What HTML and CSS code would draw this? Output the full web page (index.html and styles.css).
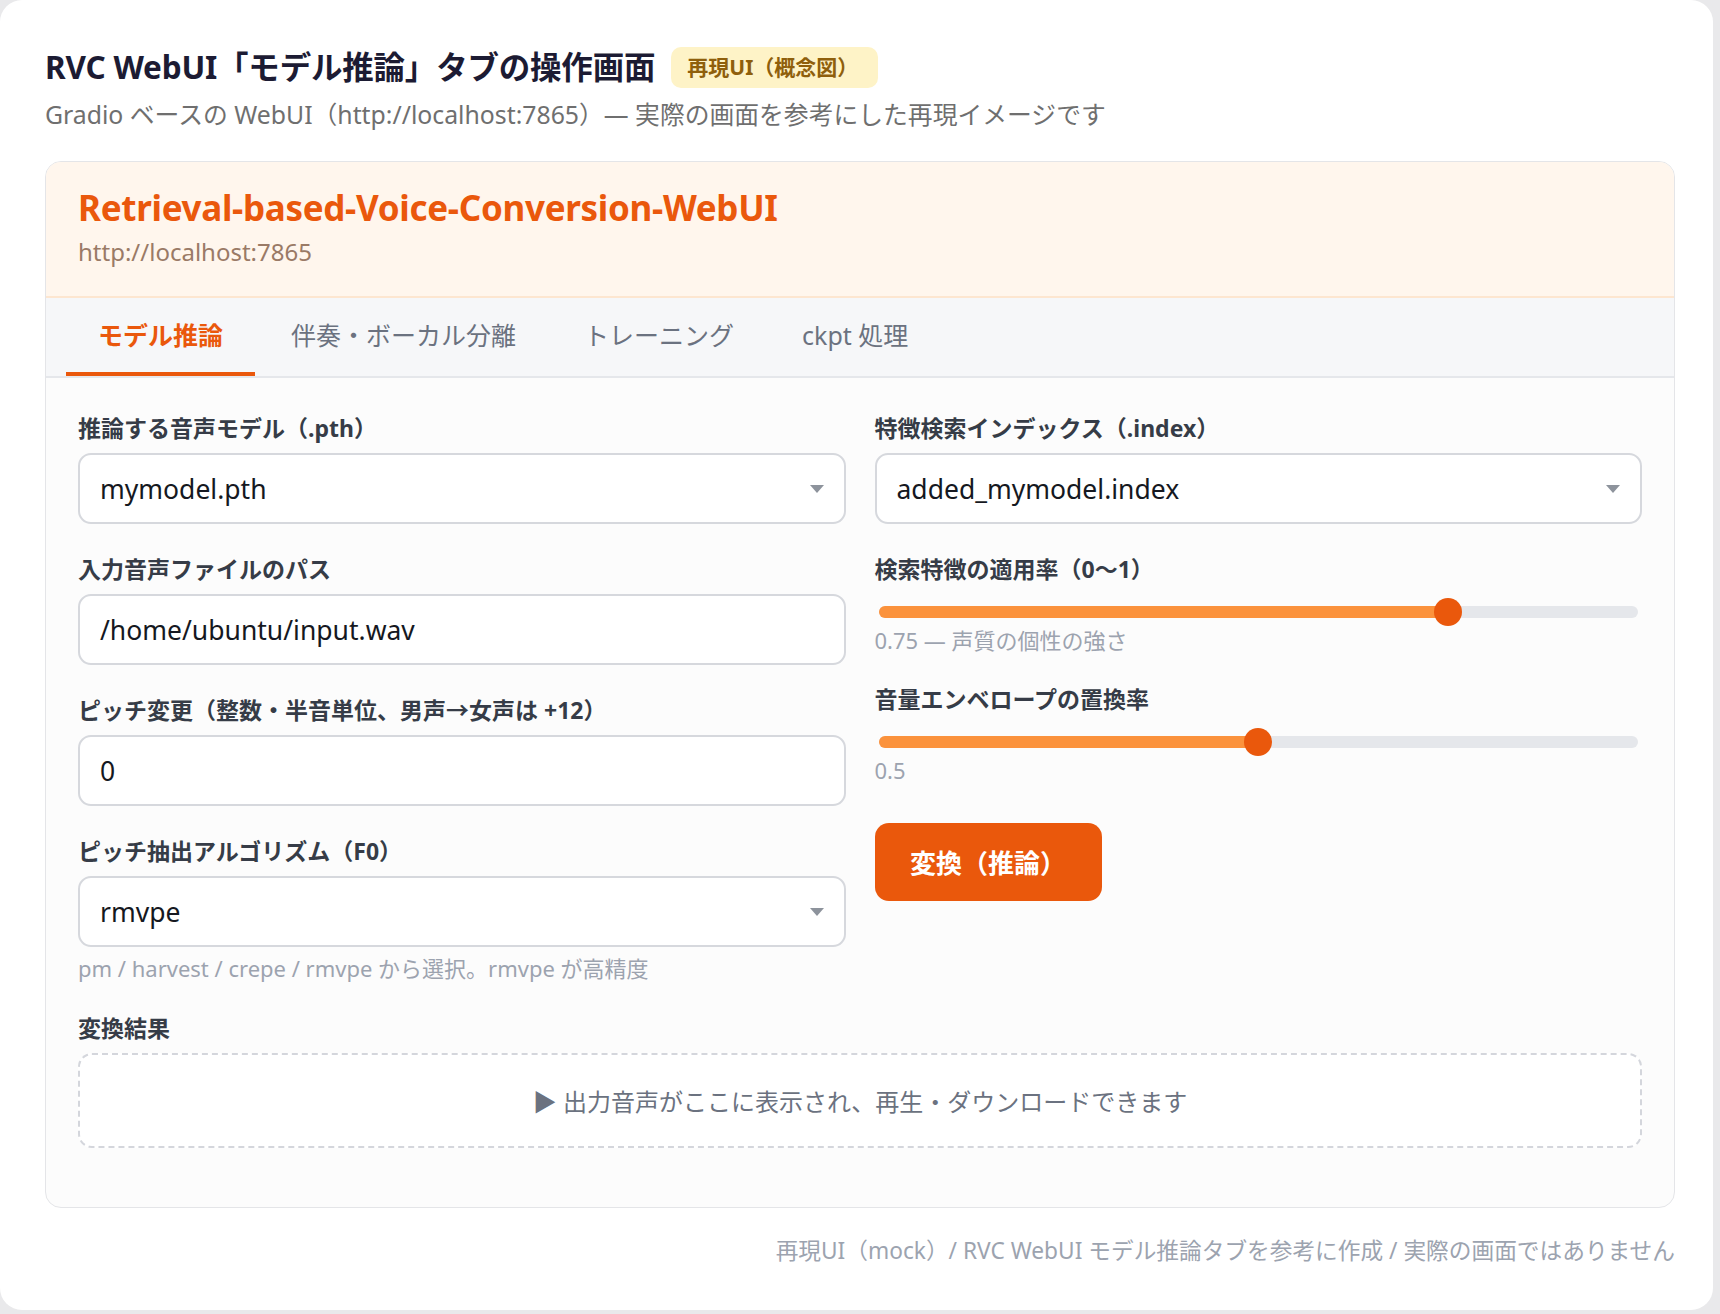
FILE: index.html
```html
<!DOCTYPE html>
<html lang="ja">
<head>
<meta charset="utf-8">
<title>RVC WebUI モデル推論</title>
<link rel="stylesheet" href="styles.css">
</head>
<body>
<div class="page">
  <div class="page-head">
    <h1 class="page-title">RVC WebUI「モデル推論」タブの操作画面</h1>
    <span class="badge">再現UI（概念図）</span>
  </div>
  <p class="page-sub">Gradio ベースの WebUI（http://localhost:7865）— 実際の画面を参考にした再現イメージです</p>

  <div class="app">
    <div class="app-head">
      <div class="app-title">Retrieval-based-Voice-Conversion-WebUI</div>
      <div class="app-url">http://localhost:7865</div>
    </div>
    <div class="tabs">
      <div class="tab active">モデル推論</div>
      <div class="tab">伴奏・ボーカル分離</div>
      <div class="tab">トレーニング</div>
      <div class="tab">ckpt 処理</div>
    </div>
    <div class="content">
      <div class="cols">
        <div class="col">
          <div class="field">
            <div class="label">推論する音声モデル（.pth）</div>
            <div class="box select"><span>mymodel.pth</span><svg class="caret" width="14" height="8" viewBox="0 0 14 8"><polygon points="0,0 14,0 7,8" fill="#8d939c"/></svg></div>
          </div>
          <div class="field">
            <div class="label">入力音声ファイルのパス</div>
            <div class="box"><span>/home/ubuntu/input.wav</span></div>
          </div>
          <div class="field">
            <div class="label">ピッチ変更（整数・半音単位、男声→女声は +12）</div>
            <div class="box"><span>0</span></div>
          </div>
          <div class="field">
            <div class="label">ピッチ抽出アルゴリズム（F0）</div>
            <div class="box select"><span>rmvpe</span><svg class="caret" width="14" height="8" viewBox="0 0 14 8"><polygon points="0,0 14,0 7,8" fill="#8d939c"/></svg></div>
            <div class="hint">pm / harvest / crepe / rmvpe から選択。rmvpe が高精度</div>
          </div>
        </div>
        <div class="col">
          <div class="field">
            <div class="label">特徴検索インデックス（.index）</div>
            <div class="box select"><span>added_mymodel.index</span><svg class="caret" width="14" height="8" viewBox="0 0 14 8"><polygon points="0,0 14,0 7,8" fill="#8d939c"/></svg></div>
          </div>
          <div class="field">
            <div class="label">検索特徴の適用率（0〜1）</div>
            <div class="slider">
              <div class="track"><div class="fill" style="width:75%"></div><div class="thumb" style="left:75%"></div></div>
            </div>
            <div class="value">0.75 — 声質の個性の強さ</div>
          </div>
          <div class="field field-last">
            <div class="label">音量エンベロープの置換率</div>
            <div class="slider">
              <div class="track"><div class="fill" style="width:50%"></div><div class="thumb" style="left:50%"></div></div>
            </div>
            <div class="value">0.5</div>
          </div>
          <button class="btn">変換（推論）</button>
        </div>
      </div>
      <div class="result">
        <div class="label">変換結果</div>
        <div class="dropzone">▶ 出力音声がここに表示され、再生・ダウンロードできます</div>
      </div>
    </div>
  </div>
  <p class="footer">再現UI（mock）/ RVC WebUI モデル推論タブを参考に作成 / 実際の画面ではありません</p>
</div>
</body>
</html>
```
FILE: styles.css
```css
* { box-sizing: border-box; }
html, body { margin: 0; padding: 0; }
body {
  background: #e9e9eb;
  font-family: "Noto Sans", "Noto Sans CJK JP", sans-serif;
  width: 1720px;
  height: 1314px;
  overflow: hidden;
}
.page {
  width: 1713px;
  height: 1310px;
  background: #ffffff;
  border-radius: 22px;
  padding: 44px 38px 0 45px;
}
.page-head {
  display: flex;
  align-items: center;
  gap: 16px;
  height: 46px;
}
.page-title {
  margin: 0;
  font-size: 31.5px;
  font-weight: 700;
  color: #1c1b33;
  line-height: 46px;
  letter-spacing: -0.2px;
}
.badge {
  background: #fef3c7;
  color: #8f5f0c;
  font-size: 21px;
  font-weight: 700;
  border-radius: 10px;
  padding: 0 20px 0 16px;
  height: 41px;
  line-height: 41px;
}
.page-sub {
  margin: 7px 0 0;
  font-size: 24.8px;
  line-height: 34px;
  color: #6f6f6f;
}
.app {
  margin-top: 30px;
  border: 1px solid #e4e5e8;
  border-radius: 16px;
  background: #fcfcfc;
  overflow: hidden;
}
.app-head {
  background: #fff6ed;
  border-bottom: 2px solid #fde6d0;
  padding: 23px 32px 27px;
}
.app-title {
  font-size: 35px;
  font-weight: 700;
  color: #ea580c;
  line-height: 46px;
  letter-spacing: -0.3px;
}
.app-url {
  margin-top: 4px;
  font-size: 24px;
  color: #9a7a66;
  line-height: 34px;
}
.tabs {
  display: flex;
  gap: 4px;
  background: #f6f7f9;
  border-bottom: 2px solid #e5e7eb;
  padding: 0 20px;
}
.tab {
  font-size: 25px;
  line-height: 34px;
  padding: 20px 32px 20px;
  color: #6b7280;
  border-bottom: 4px solid transparent;
}
.tab.active {
  color: #ea580c;
  font-weight: 700;
  border-bottom-color: #ea580c;
}
.content {
  padding: 35px 32px 59px;
}
.cols {
  display: grid;
  grid-template-columns: 1fr 1fr;
  gap: 29px;
}
.col {
  display: flex;
  flex-direction: column;
}
.field { margin-bottom: 30px; }
.field-last { margin-bottom: 39px; }
.label {
  font-size: 23px;
  line-height: 30px;
  font-weight: 700;
  color: #363c47;
  margin-bottom: 10px;
}
.box {
  height: 71px;
  border: 2px solid #d6d8dd;
  border-radius: 13px;
  background: #ffffff;
  display: flex;
  align-items: center;
  justify-content: space-between;
  padding: 0 20px;
  font-size: 26.5px;
  color: #151821;
}
.caret { flex: none; }
.hint {
  margin-top: 7px;
  font-size: 22px;
  line-height: 28px;
  color: #9ca3af;
}
.slider {
  margin-top: 14px;
  height: 28px;
  padding: 8px 4px;
}
.track {
  position: relative;
  height: 12px;
  border-radius: 6px;
  background: #e5e7eb;
}
.fill {
  height: 12px;
  border-radius: 6px;
  background: #fb923c;
}
.thumb {
  position: absolute;
  top: -8px;
  width: 28px;
  height: 28px;
  margin-left: -14px;
  border-radius: 50%;
  background: #ea580c;
}
.value {
  font-size: 22px;
  line-height: 28px;
  color: #9ca3af;
}
.btn {
  align-self: flex-start;
  width: 227px;
  height: 78px;
  padding: 0;
  border: none;
  border-radius: 14px;
  background: #ea580c;
  color: #ffffff;
  font-family: "Noto Sans", "Noto Sans CJK JP", sans-serif;
  font-size: 26px;
  font-weight: 700;
}
.result { margin-top: 1px; }
.dropzone {
  height: 95px;
  border: 2px dashed #d4d6dc;
  border-radius: 14px;
  background: #ffffff;
  display: flex;
  align-items: center;
  justify-content: center;
  font-size: 24px;
  color: #6b7280;
}
.footer {
  margin: 29px 0 0;
  text-align: right;
  font-size: 22.7px;
  line-height: 28px;
  color: #9ca3af;
}
```
